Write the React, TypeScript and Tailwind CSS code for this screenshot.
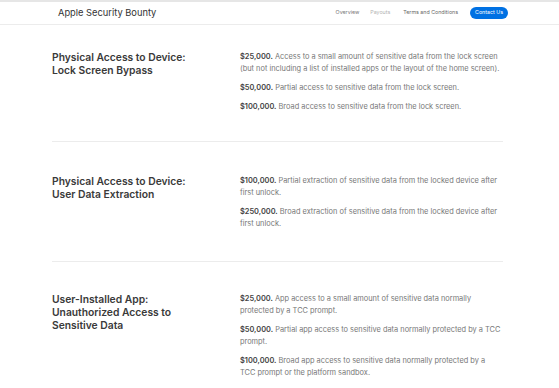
import React from "react";

type Payout = { amount: string; text: string; rest?: string };
type Section = { title: string[]; payouts: Payout[]; pad: string };

const sections: Section[] = [
  {
    title: ["Physical Access to Device:", "Lock Screen Bypass"],
    pad: "pt-[26px] pb-[28px]",
    payouts: [
      {
        amount: "$25,000.",
        text: "Access to a small amount of sensitive data from the lock screen (but not including a list of installed apps or the layout of the home screen).",
      },
      { amount: "$50,000.", text: "Partial access to sensitive data from the lock screen." },
      { amount: "$100,000.", text: "Broad access to sensitive data from the lock screen." },
    ],
  },
  {
    title: ["Physical Access to Device:", "User Data Extraction"],
    pad: "pt-[33px] pb-[31px]",
    payouts: [
      {
        amount: "$100,000.",
        text: "Partial extraction of sensitive data from the locked device after first unlock.",
      },
      {
        amount: "$250,000.",
        text: "Broad extraction of sensitive data from the locked device after first unlock.",
      },
    ],
  },
  {
    title: ["User-Installed App:", "Unauthorized Access to", "Sensitive Data"],
    pad: "pt-[31px] pb-[31px]",
    payouts: [
      {
        amount: "$25,000.",
        text: "App access to a small amount of sensitive data normally protected by a TCC prompt.",
      },
      {
        amount: "$50,000.",
        text: "Partial app access to sensitive data normally protected by a TCC prompt.",
      },
      {
        amount: "$100,000.",
        text: "Broad app access to sensitive data normally protected by a",
        rest: "TCC prompt or the platform sandbox.",
      },
    ],
  },
];

export default function App() {
  return (
    <div className="w-[559px] h-[388px] overflow-hidden bg-white font-['Inter',sans-serif]">
      {/* Top strip */}
      <div className="h-[2px] bg-[#e6e6e6]" />

      {/* Nav */}
      <nav className="h-[23px] border-b border-[#ececec] bg-white">
        <div className="ml-[58px] w-[450px] h-full flex items-center justify-between">
          <span className="text-[9.3px] text-[#333]">Apple Security Bounty</span>
          <div className="flex items-center text-[5.3px]">
            <span className="text-[#777]">Overview</span>
            <span className="ml-[11px] text-[#b4b4b4]">Payouts</span>
            <span className="ml-[13px] text-[#666]">Terms and Conditions</span>
            <span className="ml-[12px] h-[12px] w-[38px] flex items-center justify-center rounded-full bg-[#0071e3] text-white">
              Contact Us
            </span>
          </div>
        </div>
      </nav>

      {/* Sections */}
      <main className="ml-[52px] w-[451px]">
        {sections.map((s, i) => (
          <section
            key={i}
            className={`grid grid-cols-[188px_1fr] border-b border-[#ececec] ${s.pad}`}
          >
            <h2 className="text-[10.3px] leading-[13px] font-semibold text-[#3a3a3a]">
              {s.title.map((t, j) => (
                <span key={j} className="block">
                  {t}
                </span>
              ))}
            </h2>
            <div className="flex flex-col gap-[7px]">
              {s.payouts.map((p, j) => (
                <p key={j} className="text-[7.4px] leading-[12px] text-[#777]">
                  <span className="font-semibold text-[#444]">{p.amount}</span> {p.text}
                  {p.rest && (
                    <>
                      <br />
                      {p.rest}
                    </>
                  )}
                </p>
              ))}
            </div>
          </section>
        ))}
      </main>
    </div>
  );
}
